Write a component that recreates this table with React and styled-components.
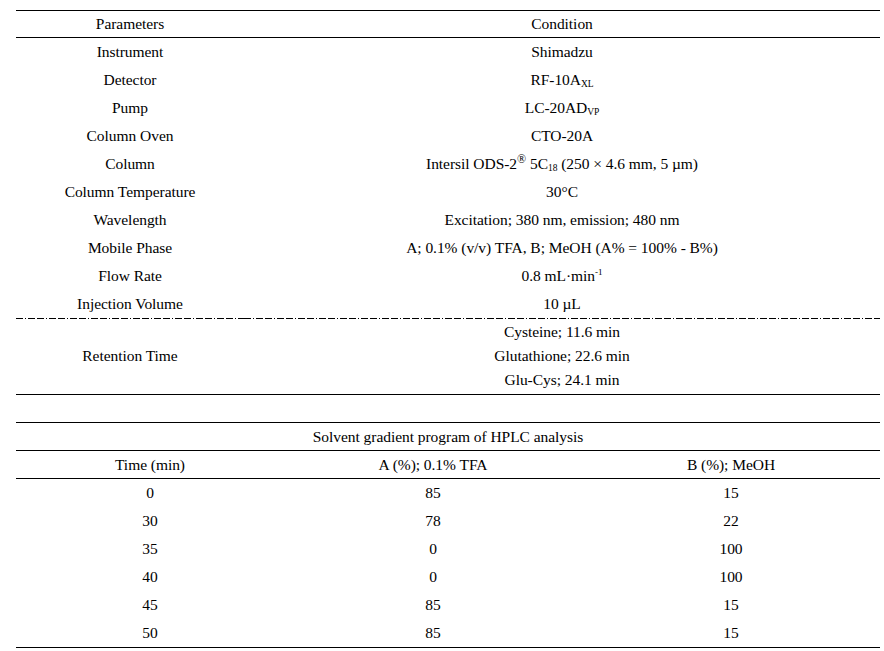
import React from 'react';
import styled, { createGlobalStyle } from 'styled-components';

const GlobalStyle = createGlobalStyle`
  html, body {
    margin: 0;
    padding: 0;
    background: #fff;
  }
  body {
    font-family: "Liberation Serif", "Times New Roman", serif;
    color: #000;
  }
`;

const Page = styled.div`
  width: 864px;
  padding: 10px 4px 0 16px;
  display: flex;
  flex-direction: column;
  gap: 27px;
`;

const Table = styled.div`
  display: grid;
  grid-template-columns: ${props => props.cols};
  border-top: 1px solid #000;
  border-bottom: 1px solid #000;
  font-family: "Liberation Serif", "Times New Roman", serif;
  font-size: 15.5px;
  letter-spacing: -0.05px;
`;

const Cell = styled.div`
  height: ${props => props.h || 28}px;
  display: flex;
  align-items: center;
  justify-content: center;
  text-align: center;
  white-space: nowrap;
  border-bottom: ${props => (props.rule ? '1px solid #000' : 'none')};
  box-sizing: border-box;
  ${props => props.span && `grid-column: 1 / -1;`}
  ${props => props.dashed && `
    background-image: repeating-linear-gradient(to right, #000 0 7px, transparent 7px 9px, #000 9px 10px, transparent 10px 12px, #000 12px 19px, transparent 19px 21px);
    background-size: 100% 1px;
    background-repeat: no-repeat;
    background-position: left top;
  `}
`;

const Text = styled.span`
  white-space: pre;
`;

const Stack = styled.div`
  display: flex;
  flex-direction: column;
  align-items: center;
  line-height: 24px;
`;

const Sub = styled.sub`
  font-size: 9.5px;
  vertical-align: -2px;
  line-height: 0;
`;

const Sup = styled.sup`
  font-size: ${props => props.size || 9}px;
  vertical-align: 6px;
  line-height: 0;
`;

const params = [
  ['Instrument', 'Shimadzu'],
  ['Detector', <>RF-10A<Sub>XL</Sub></>],
  ['Pump', <>LC-20AD<Sub>VP</Sub></>],
  ['Column Oven', 'CTO-20A'],
  ['Column', <>Intersil ODS-2<Sup size={12}>®</Sup> 5C<Sub>18</Sub> (250 × 4.6 mm, 5 µm)</>],
  ['Column Temperature', '30°C'],
  ['Wavelength', 'Excitation; 380 nm, emission; 480 nm'],
  ['Mobile Phase', 'A; 0.1% (v/v) TFA, B; MeOH (A% = 100% - B%)'],
  ['Flow Rate', <>0.8 mL·min<Sup>-1</Sup></>],
  ['Injection Volume', '10 µL'],
];

const gradient = [
  [0, 85, 15],
  [30, 78, 22],
  [35, 0, 100],
  [40, 0, 100],
  [45, 85, 15],
  [50, 85, 15],
];

const retention = ['Cysteine; 11.6 min', 'Glutathione; 22.6 min', 'Glu-Cys; 24.1 min'];

export default function App() {
  return (
    <>
      <GlobalStyle />
      <Page>
        <Table cols="228px 636px">
          <Cell h={27} rule>Parameters</Cell>
          <Cell h={27} rule>Condition</Cell>
          {params.map(([name, value], i) => (
            <React.Fragment key={i}>
              <Cell>{name}</Cell>
              <Cell><Text>{value}</Text></Cell>
            </React.Fragment>
          ))}
          <Cell h={76} dashed>Retention Time</Cell>
          <Cell h={76} dashed>
            <Stack>
              {retention.map(r => <span key={r}>{r}</span>)}
            </Stack>
          </Cell>
        </Table>

        <Table cols="268px 298px 298px">
          <Cell span rule>Solvent gradient program of HPLC analysis</Cell>
          <Cell rule>Time (min)</Cell>
          <Cell rule>A (%); 0.1% TFA</Cell>
          <Cell rule>B (%); MeOH</Cell>
          {gradient.map((row, i) => (
            <React.Fragment key={i}>
              {row.map((v, j) => <Cell key={j}>{v}</Cell>)}
            </React.Fragment>
          ))}
        </Table>
      </Page>
    </>
  );
}
